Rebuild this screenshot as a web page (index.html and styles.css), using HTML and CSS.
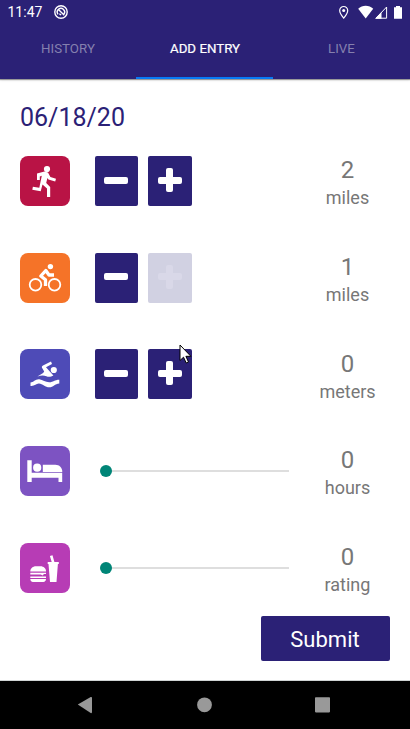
FILE: index.html
```html
<!DOCTYPE html>
<html lang="en">
<head>
<meta charset="utf-8">
<title>Add Entry</title>
<link rel="stylesheet" href="styles.css">
</head>
<body>
<div class="screen">
  <header class="header">
    <div class="status">
      <span class="time">11:47</span>
      <svg class="sync" viewBox="0 0 14 14"><circle cx="7" cy="7" r="6.200" fill="none" stroke="#fff" stroke-width="1.400"/><path d="M4 9.300a3.700 3.700 0 0 1 5.500-4.900a3.700 3.700 0 0 1 .6 4.600M4.700 4.700l5.600 5.600M5.400 8.700l1.700 1.300" fill="none" stroke="#fff" stroke-width="1.400"/></svg>
      <svg class="indicators" viewBox="338 4 66 15">
        <path d="M343.700 5.500a4 4 0 0 0-4 4c0 3 4 7.600 4 7.600s4-4.600 4-7.600a4 4 0 0 0-4-4z" fill="none" stroke="#fff" stroke-width="1.200"/><circle cx="343.700" cy="9.500" r="1.500" fill="#fff"/>
        <path d="M358.200 7.700c4-3.900 11-3.900 15 0L365.700 17.500z" fill="#fff"/>
        <path d="M376 17.200L386.600 6v11.200z" fill="none" stroke="#fff" stroke-width="1"/><path d="M375 17.700l6.500-6.800v6.800z" fill="#fff"/>
        <path d="M394 6.200h2V5h4v1.200h2v11.500h-8z" fill="#fff"/>
      </svg>
    </div>
    <nav class="tabs">
      <a class="tab">HISTORY</a>
      <a class="tab active">ADD ENTRY</a>
      <a class="tab">LIVE</a>
    </nav>
  </header>

  <main class="content">
    <h1 class="date">06/18/20</h1>
    <section class="row">
      <svg class="badge run" viewBox="0 0 50 50"><circle cx="27" cy="13" r="3.100"/><path d="M17 24v-6.500l7.500-2 3.500 1 2.400 4.500 5.600 1.700-.8 2.800-6.800-2-1-1.500-1.200 5 4 4V41h-3.200v-8.500l-4.500-4-1.800 6.800L12.300 33.700l.6-3 6.400 1 2.500-12-2 .8V24z"/></svg>
      <div class="stepper"><button class="step" aria-label="Decrease"><i class="minus"></i></button><button class="step" aria-label="Increase"><i class="plus"></i></button></div>
      <div class="reading"><span class="value">2</span><span class="unit">miles</span></div>
    </section>
    <section class="row">
      <svg class="badge bike" viewBox="0 0 50 50"><circle cx="30.400" cy="13.600" r="2.700"/><g fill="none" stroke="#fff"><circle cx="15.500" cy="31.800" r="5.800" stroke-width="1.800"/><circle cx="34.500" cy="31.800" r="5.800" stroke-width="1.800"/><path d="M25.500 33v-6.200L20.800 23l5-5.500 3.200 4.500h5" stroke-width="3.300" stroke-linejoin="round"/></g></svg>
      <div class="stepper"><button class="step" aria-label="Decrease"><i class="minus"></i></button><button class="step" disabled aria-label="Increase"><i class="plus"></i></button></div>
      <div class="reading"><span class="value">1</span><span class="unit">miles</span></div>
    </section>
    <section class="row">
      <svg class="badge swim" viewBox="0 0 50 50"><circle cx="33.800" cy="21" r="3.100"/><path d="M31 12.400l1 2.500-6 3.300 7.400 8.300c-2 1-4.500 2-7 .8-2.800-1.300-5.800-.8-9 .1l5.700-3.400 1.100-1.600-2.200-3.700c-.5-1 .1-1.700 1-2.200z"/><path d="M10.500 33.500c3-.2 5-3.600 8.800-3.200 3.700.4 6.300 3.200 10.200 3 3.700-.2 5-2.600 9.800-2.600v3.700c-4.500.2-6 3.900-10 3.900s-6.800-3.600-10.300-3.800c-3-.2-4.300 2.900-8.500 2.400z"/></svg>
      <div class="stepper"><button class="step" aria-label="Decrease"><i class="minus"></i></button><button class="step" aria-label="Increase"><i class="plus"></i><svg class="cursor" viewBox="0 0 13 20"><path d="M1 1v15.500l3.500-3.300 2.700 5.800 2.300-1-2.600-5.700h5z" fill="#fff" stroke="#000"/></svg></button></div>
      <div class="reading meters"><span class="value">0</span><span class="unit">meters</span></div>
    </section>
    <section class="row">
      <svg class="badge sleep" viewBox="0 0 50 50"><path d="M7.300 14.300h4.400v12.500h30.500V36h-3.700v-4.300H11.700V36H7.300z"/><circle cx="17.200" cy="21.700" r="4.100"/><path d="M22.800 18.800h12.500c4 0 7 2.800 7 7.100H22.800z"/></svg>
      <div class="slider"><span class="thumb"></span></div>
      <div class="reading"><span class="value">0</span><span class="unit">hours</span></div>
    </section>
    <section class="row">
      <svg class="badge food" viewBox="0 0 50 50"><path d="M10.300 28.600c0-3.200 2.700-5.300 5.500-5.300h4.800c3 0 5.500 2.100 5.500 5.300zM10.300 29.800H26v1.300h-2l-1.500 1.500-1.600-1.200H10.300zM10.300 33.600H26V35H10.300zM10.300 36H26c0 1.700-1 2.900-2.700 2.900H13c-1.700 0-2.700-1.200-2.700-2.900zM27.700 19h4l-1.800-6.100 2.600-.6 1.900 6.700h4.400v2h-.9l-1.400 18h-6.500l-1.500-18h-.8z"/></svg>
      <div class="slider"><span class="thumb"></span></div>
      <div class="reading"><span class="value">0</span><span class="unit">rating</span></div>
    </section>
    <button class="submit">Submit</button>
  </main>

  <footer class="system-nav">
    <svg viewBox="0 0 410 48"><path d="M77.800 23.500L90.700 16Q92 15.500 92 17v14q0 1.500-1.300 1z"/><circle cx="204.500" cy="23.800" r="7.400"/><rect x="315" y="16.200" width="15" height="15.200" rx=".8"/></svg>
  </footer>
</div>
</body>
</html>
```
FILE: styles.css
```css
* { box-sizing: border-box; }

body {
  margin: 0;
  font-family: Roboto, sans-serif;
  background: #fff;
}

.screen {
  width: 410px;
  height: 729px;
  display: flex;
  flex-direction: column;
  overflow: hidden;
}

.header {
  height: 79px;
  flex: none;
  background: #2b2176;
  box-shadow: 0 1px 1px rgba(0, 0, 0, .35), 0 1px 3px rgba(0, 0, 0, .12);
}

.status {
  height: 24px;
  display: flex;
  align-items: center;
  padding: 0 6px 0 7.500px;
  color: #fff;
  font-size: 14px;
}

.sync { width: 14px; height: 14px; margin-left: 11.500px; }
.indicators { width: 66px; height: 15px; margin-left: auto; }

.tabs { display: grid; grid-template-columns: 136px 137px 137px; height: 55px; }

.tab {
  padding-top: 16px;
  line-height: 17px;
  text-align: center;
  font-size: 13.300px;
  color: #8580ae;
}

.tab.active {
  padding-left: 1px;
  color: #fff;
  border-bottom: 2px solid #087af5;
  -webkit-text-stroke: .2px #fff;
}

.content {
  flex: 1;
  display: flex;
  flex-direction: column;
  padding: 24px 20px 0;
}

.date {
  margin: 0 0 23px;
  font-size: 25px;
  line-height: 30px;
  font-weight: 400;
  color: #2b2176;
}

.row {
  display: grid;
  grid-template-columns: 74.500px 195px 116px;
  grid-template-rows: 50px;
  height: 50px;
  flex: none;
  margin-bottom: 46.700px;
}

.badge { width: 50px; height: 50px; border-radius: 8px; fill: #fff; }
.run { background: #b91345; }
.bike { background: #f57328; }
.swim { background: #4e4bb7; }
.sleep { background: #7d53c2; }
.food { background: #b73cb5; }

.stepper { display: flex; gap: 10px; }

.step {
  position: relative;
  width: 43.500px;
  height: 50px;
  border: 0;
  border-radius: 2px;
  padding: 0 0 2px;
  background: #2b2176;
  display: flex;
  align-items: center;
  justify-content: center;
  color: #fff;
}

.step:disabled { background: #d1d1e2; color: #d9d8e8; }

.minus, .plus { display: block; width: 24px; height: 7px; border-radius: 2px; background: currentColor; }
.plus { position: relative; }
.plus::after {
  content: "";
  position: absolute;
  left: 8.500px;
  top: -8.500px;
  width: 7px;
  height: 24px;
  border-radius: 2px;
  background: currentColor;
}

.cursor { position: absolute; left: 31px; top: -5px; width: 13px; height: 20px; }

.slider {
  position: relative;
  align-self: center;
  margin-left: 11px;
  width: 183.500px;
  height: 2px;
  background: #dedede;
}

.thumb {
  position: absolute;
  left: -6px;
  top: -5px;
  width: 12px;
  height: 12px;
  border-radius: 50%;
  background: #008577;
}

.reading {
  display: flex;
  flex-direction: column;
  align-items: center;
  color: #777;
}

.reading.meters { padding-top: .6px; }

.value { font-size: 24px; line-height: 28px; }
.unit { font-size: 18px; line-height: 28px; }

.submit {
  align-self: flex-end;
  flex: none;
  margin: -23.500px .5px 0 0;
  width: 129px;
  height: 45px;
  padding: 2px 0 0;
  border: 0;
  border-radius: 2px;
  background: #2b2176;
  color: #fff;
  font: 400 22px Roboto, sans-serif;
}

.system-nav { height: 48px; flex: none; background: #000; box-shadow: 0 -1px #d0d4d4; }
.system-nav svg { display: block; width: 410px; height: 48px; fill: #999; }
```
